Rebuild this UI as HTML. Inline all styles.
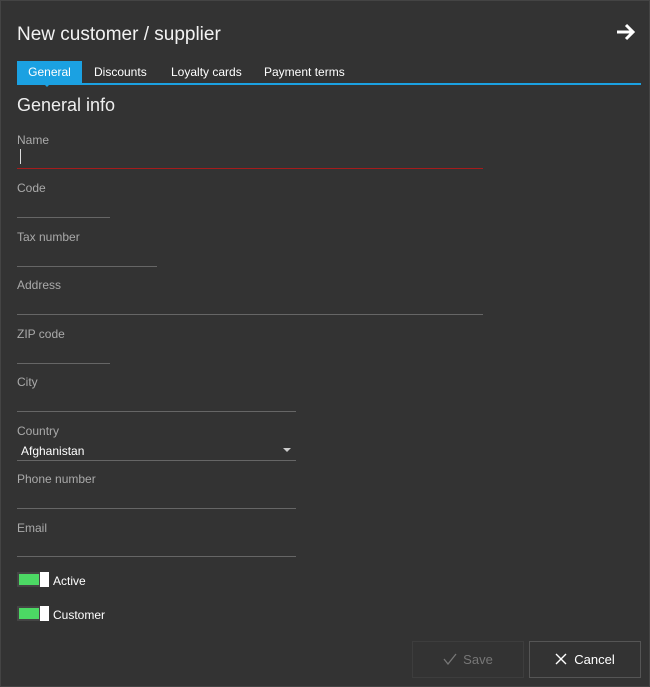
<!DOCTYPE html><html><head><style>
body{margin:0;width:650px;height:687px;background:#333;font-family:"Liberation Sans",sans-serif;overflow:hidden;position:relative;color:#fff}
.b{position:absolute;left:0;top:0;width:648px;height:685px;border:1px solid #444}
.a{position:absolute}
.t{font-size:19px;left:17px;top:24px;color:#f2f2f2}
.tab{top:61px;height:22px;font-size:12px;line-height:22px}
.lbl{font-size:12px;color:#aaa;left:17px}
.ln{height:1px;background:#666;left:17px}
.tg{left:17px;width:32px;height:15px;background:#444}
.tg i{position:absolute;left:2px;top:2px;width:20px;height:11px;background:#4cd964}
.tg b{position:absolute;right:0;top:0;width:9px;height:15px;background:#fff}
.btn{top:641px;height:35px;width:110px;border:1px solid #3d3d3d;font-size:13px;text-align:center;line-height:35px}
</style></head><body><div class="b"></div>
<div class="a t">New customer / supplier</div>
<svg class="a" style="left:615px;top:22px" width="22" height="20" viewBox="0 0 22 20"><path d="M2 10H18M11 3L18 10L11 17" stroke="#fff" stroke-width="3" fill="none"/></svg>
<div class="a tab" style="left:17px;width:65px;background:#1ba1e2;text-align:center">General</div>
<div class="a" style="left:43px;top:83px;border:4px solid transparent;border-top-color:#1ba1e2;border-bottom:0"></div>
<div class="a tab" style="left:94px">Discounts</div>
<div class="a tab" style="left:171px">Loyalty cards</div>
<div class="a tab" style="left:264px">Payment terms</div>
<div class="a" style="left:17px;top:83px;width:624px;height:2px;background:#1ba1e2"></div>
<div class="a" style="left:17px;top:95px;font-size:18px;color:#eee">General info</div>
<div class="a lbl" style="top:133px">Name</div><div class="a" style="left:20px;top:149px;width:1px;height:15px;background:#ddd"></div><div class="a ln" style="top:168px;width:466px;background:#a51c1c"></div>
<div class="a lbl" style="top:181px">Code</div><div class="a ln" style="top:217px;width:93px"></div>
<div class="a lbl" style="top:230px">Tax number</div><div class="a ln" style="top:266px;width:140px"></div>
<div class="a lbl" style="top:278px">Address</div><div class="a ln" style="top:314px;width:466px"></div>
<div class="a lbl" style="top:327px">ZIP code</div><div class="a ln" style="top:363px;width:93px"></div>
<div class="a lbl" style="top:375px">City</div><div class="a ln" style="top:411px;width:279px"></div>
<div class="a lbl" style="top:424px">Country</div><div class="a" style="left:21px;top:444px;font-size:12px">Afghanistan</div><div class="a" style="left:283px;top:448px;border:4px solid transparent;border-top-color:#ccc;border-bottom:0"></div><div class="a ln" style="top:460px;width:279px"></div>
<div class="a lbl" style="top:472px">Phone number</div><div class="a ln" style="top:508px;width:279px"></div>
<div class="a lbl" style="top:521px">Email</div><div class="a ln" style="top:556px;width:279px"></div>
<div class="a tg" style="top:572px"><i></i><b></b></div><div class="a" style="left:53px;top:574px;font-size:12px">Active</div>
<div class="a tg" style="top:606px"><i></i><b></b></div><div class="a" style="left:53px;top:608px;font-size:12px">Customer</div>
<div class="a btn" style="left:412px;color:#777"><svg width="14" height="12" viewBox="0 0 14 12" style="vertical-align:-1px;margin-right:6px"><path d="M1 6L5 11L13 1" stroke="#777" stroke-width="1.3" fill="none"/></svg>Save</div>
<div class="a btn" style="left:529px;border-color:#555"><svg width="12" height="12" viewBox="0 0 12 12" style="vertical-align:-1px;margin-right:7px"><path d="M1 1L11 11M11 1L1 11" stroke="#fff" stroke-width="1.4"/></svg>Cancel</div>
</body></html>
